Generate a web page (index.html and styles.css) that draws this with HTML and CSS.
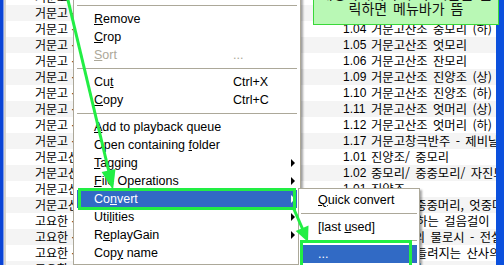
FILE: index.html
```html
<!DOCTYPE html>
<html lang="ko">
<head>
<meta charset="utf-8">
<title>foobar2000 context menu</title>
<link rel="stylesheet" href="styles.css">
</head>
<body>
<div class="window">
  <div class="frame-left"></div>
  <div class="list">
    <div class="row"><span class="c1">거문고 산조</span><span class="c2"><span class="no">1.02</span><span class="t">거문고산조 진양조</span></span></div>
    <div class="row alt"><span class="c1">거문고 산조</span><span class="c2"><span class="no">1.03</span><span class="t">거문고산조 중모리 (상)</span></span></div>
    <div class="row"><span class="c1">거문고 산조</span><span class="c2"><span class="no">1.04</span><span class="t">거문고산조 중모리 (하)</span></span></div>
    <div class="row alt"><span class="c1">거문고 산조</span><span class="c2"><span class="no">1.05</span><span class="t">거문고산조 엇모리</span></span></div>
    <div class="row"><span class="c1">거문고 산조</span><span class="c2"><span class="no">1.06</span><span class="t">거문고산조 잔모리</span></span></div>
    <div class="row alt"><span class="c1">거문고 산조</span><span class="c2"><span class="no">1.09</span><span class="t">거문고산조 진양조 (상)</span></span></div>
    <div class="row"><span class="c1">거문고 산조</span><span class="c2"><span class="no">1.10</span><span class="t">거문고산조 진양조 (하)</span></span></div>
    <div class="row alt"><span class="c1">거문고 산조</span><span class="c2"><span class="no">1.11</span><span class="t">거문고산조 엇머리 (상)</span></span></div>
    <div class="row"><span class="c1">거문고 산조</span><span class="c2"><span class="no">1.12</span><span class="t">거문고산조 엇머리 (하)</span></span></div>
    <div class="row alt"><span class="c1">거문고 산조</span><span class="c2"><span class="no">1.17</span><span class="t">거문고창극반주 - 제비날개</span></span></div>
    <div class="row"><span class="c1">거문고산조 합주</span><span class="c2"><span class="no">1.01</span><span class="t">진양조/ 중모리</span></span></div>
    <div class="row alt"><span class="c1">거문고산조 합주</span><span class="c2"><span class="no">1.02</span><span class="t">중모리/ 중중모리/ 자진모리</span></span></div>
    <div class="row"><span class="c1">거문고산조 독주</span><span class="c2"><span class="no">1.01</span><span class="t">진양조</span></span></div>
    <div class="row alt"><span class="c1">거문고산조 독주</span><span class="c2"><span class="no">1.02</span><span class="t">진양조/ 중중머리, 엇중머리</span></span></div>
    <div class="row"><span class="c1">고요한 산사</span><span class="c2"><span class="no">1.01</span><span class="t">사뿐사뿐하는 걸음걸이</span></span></div>
    <div class="row alt"><span class="c1">고요한 산사</span><span class="c2"><span class="no">1.02</span><span class="t">계곡, 물의 물로시 - 전설</span></span></div>
    <div class="row"><span class="c1">고요한 산사</span><span class="c2"><span class="no">1.03</span><span class="t">종 소리 들려지는 산사의 아침</span></span></div>
    <div class="row alt"><span class="c1">고요한 산사</span><span class="c2"><span class="no">1.04</span><span class="t">바람 소리</span></span></div>
  </div>
  <div class="frame-right"></div>
</div>

<div class="menu main">
  <div class="item"><span class="label"><u>P</u>lay</span></div>
  <div class="sep"></div>
  <div class="item"><span class="label"><u>R</u>emove</span></div>
  <div class="item"><span class="label"><u>C</u>rop</span></div>
  <div class="item disabled"><span class="label"><u>S</u>ort</span><span class="key">...</span></div>
  <div class="sep"></div>
  <div class="item"><span class="label">Cu<u>t</u></span><span class="key">Ctrl+X</span></div>
  <div class="item"><span class="label"><u>C</u>opy</span><span class="key">Ctrl+C</span></div>
  <div class="sep"></div>
  <div class="item"><span class="label"><u>A</u>dd to playback queue</span></div>
  <div class="item"><span class="label">Open containing <u>f</u>older</span></div>
  <div class="item sub-arrow"><span class="label"><u>T</u>agging</span></div>
  <div class="item sub-arrow"><span class="label"><u>F</u>ile Operations</span></div>
  <div class="item sub-arrow hl"><span class="label">Co<u>n</u>vert</span></div>
  <div class="item sub-arrow"><span class="label">Uti<u>l</u>ities</span></div>
  <div class="item sub-arrow"><span class="label">R<u>e</u>playGain</span></div>
  <div class="item"><span class="label">Cop<u>y</u> name</span></div>
</div>

<div class="menu sub">
  <div class="item"><span class="label"><u>Q</u>uick convert</span></div>
  <div class="sep"></div>
  <div class="item"><span class="label">[last <u>u</u>sed]</span></div>
  <div class="sep"></div>
  <div class="item hl"><span class="label">...</span></div>
  <div class="item"><span class="label">&nbsp;</span></div>
</div>

<div class="callout">
  <p>재생목록에서 우측 버튼을 클</p>
  <p>릭하면 메뉴바가 뜸</p>
</div>

<svg class="arrows" width="504" height="265" viewBox="0 0 504 265">
  <g fill="none" stroke="#22ee44" stroke-width="3">
    <rect x="79.5" y="189.5" width="215" height="19"/>
    <rect x="301.5" y="241.5" width="109" height="40"/>
    <line x1="67" y1="-4" x2="109" y2="172"/>
    <line x1="293" y1="207" x2="303" y2="230"/>
  </g>
  <g fill="#22ee44">
    <polygon points="113,190 101.6,172 115.5,169"/>
    <polygon points="308,242 295.7,231 308.5,225.4"/>
  </g>
</svg>
</body>
</html>
```

FILE: styles.css
```css
* {
  box-sizing: border-box;
}

html,
body {
  margin: 0;
  padding: 0;
}

body {
  width: 504px;
  height: 265px;
  overflow: hidden;
  position: relative;
  background: #fff;
  font-family: "Noto Sans CJK KR", "Liberation Sans", sans-serif;
}

.window {
  display: flex;
  height: 265px;
}

.frame-left {
  width: 6px;
  flex: none;
  background: linear-gradient(to right, #0a44d6 0 3px, #7d9be8 3px 4px, #d6d3ce 4px 6px);
}

.frame-right {
  width: 8px;
  flex: none;
  background: #0b50dd;
}

.list {
  flex: 1;
  display: flex;
  flex-direction: column;
  margin-top: -11px;
  overflow: hidden;
}

.row {
  height: 16px;
  flex: none;
  display: flex;
  align-items: center;
  font-size: 12px;
  line-height: 16px;
  white-space: nowrap;
  color: #000;
}

.row.alt {
  background: #f4f4f4;
}

.c1 {
  width: 330px;
  flex: none;
  padding-left: 29px;
  overflow: hidden;
}

.c2 {
  flex: 1;
  display: flex;
  padding-left: 7px;
  overflow: hidden;
  font-size: 12.3px;
}

.no {
  width: 28px;
  flex: none;
  font-family: "Liberation Sans", sans-serif;
  font-size: 12px;
}

.t {
  white-space: nowrap;
  word-spacing: 2px;
}

/* menus */
.menu {
  position: absolute;
  background: #fff;
  border: 1px solid #aca899;
  box-shadow: 2px 2px 2px rgba(0, 0, 0, 0.35);
  font-family: "Liberation Sans", sans-serif;
  font-size: 12.5px;
  color: #000;
}

.menu.main {
  left: 73px;
  top: -20px;
  width: 228px;
  padding: 2px 3px;
}

.menu.sub {
  left: 298px;
  top: 188px;
  width: 122px;
  padding: 2px 2px;
}

.item {
  height: 18px;
  display: flex;
  align-items: center;
  padding-left: 17px;
  position: relative;
  white-space: nowrap;
}

.main .item .label {
  width: 139px;
  flex: none;
}

.item .key {
  flex: none;
}

.item.disabled {
  color: #aca899;
}

.item.hl {
  background: #316ac5;
  color: #fff;
}

.item.sub-arrow::after {
  content: "";
  position: absolute;
  right: 2px;
  top: 5px;
  border-style: solid;
  border-width: 4px 0 4px 4px;
  border-color: transparent transparent transparent #000;
}

.item.sub-arrow.hl::after {
  border-left-color: #fff;
}

.sep {
  height: 9px;
  display: flex;
  align-items: center;
}

.sep::after {
  content: "";
  flex: 1;
  height: 1px;
  background: #aca899;
}

/* callout */
.callout {
  position: absolute;
  left: 313px;
  top: -18px;
  width: 186px;
  height: 43px;
  padding-top: 3px;
  background: #b9f8b5;
  border: 1px solid #3ad83a;
  font-family: "Noto Sans CJK KR", sans-serif;
  font-size: 14px;
  line-height: 15px;
  text-align: center;
  word-spacing: 2px;
  color: #111;
}

.callout p {
  margin: 0;
}

.arrows {
  position: absolute;
  left: 0;
  top: 0;
  pointer-events: none;
}
```
